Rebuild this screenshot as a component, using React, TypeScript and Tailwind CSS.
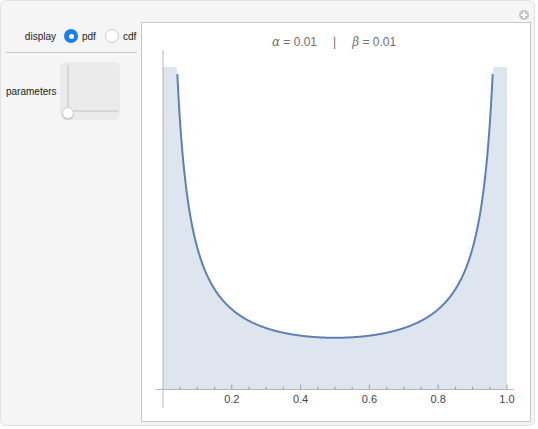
import React from "react";

const X0 = 163;
const X1 = 507;
const Y0 = 389;
const YTOP = 67;
const YMAX = 0.124;
const B = 199.97;

function pdf(x: number) {
  return Math.pow(x, -0.99) * Math.pow(1 - x, -0.99) / B;
}

function buildPaths() {
  const sx = (x: number) => X0 + x * (X1 - X0);
  const sy = (v: number) => Y0 - (Math.min(v, YMAX) / YMAX) * (Y0 - YTOP);
  const pts: [number, number][] = [];
  const n = 600;
  for (let i = 1; i < n; i++) {
    const x = i / n;
    pts.push([sx(x), sy(pdf(x))]);
  }
  // line only where the curve is below the clip
  const inside = pts.filter((p, i) => {
    const x = (i + 1) / n;
    return pdf(x) <= YMAX;
  });
  const line = inside.map((p, i) => `${i ? "L" : "M"}${p[0].toFixed(2)},${p[1].toFixed(2)}`).join("");
  const fill =
    `M${X0},${Y0}L${X0},${YTOP}` +
    pts.map((p) => `L${p[0].toFixed(2)},${p[1].toFixed(2)}`).join("") +
    `L${X1},${YTOP}L${X1},${Y0}Z`;
  return { line, fill };
}

function Plot() {
  const { line, fill } = buildPaths();
  const ticks: number[] = [];
  for (let i = 1; i <= 20; i++) ticks.push(i * 0.05);
  return (
    <svg width={388} height={371} viewBox="142 50 388 371" className="block">
      <path d={fill} fill="#dfe5ef" />
      <line x1={163} y1={50} x2={163} y2={408} stroke="#b5b5b5" strokeWidth={1} />
      <line x1={156} y1={389.5} x2={514} y2={389.5} stroke="#b5b5b5" strokeWidth={1} />
      {ticks.map((t, i) => {
        const x = X0 + t * (X1 - X0);
        const major = (i + 1) % 4 === 0;
        return (
          <line
            key={i}
            x1={x}
            y1={389}
            x2={x}
            y2={major ? 384.5 : 386.5}
            stroke="#8a8a8a"
            strokeWidth={0.8}
          />
        );
      })}
      {[0.2, 0.4, 0.6, 0.8, 1.0].map((t) => (
        <text
          key={t}
          x={X0 + t * (X1 - X0)}
          y={403}
          textAnchor="middle"
          fontSize={11}
          fill="#444"
          fontFamily="'Liberation Sans', Arial, sans-serif"
        >
          {t.toFixed(1)}
        </text>
      ))}
      <path d={line} fill="none" stroke="#5e81b5" strokeWidth={2} strokeLinejoin="round" />
    </svg>
  );
}

export default function App() {
  return (
    <div className="h-[429px] w-[538px] bg-white font-['Liberation_Sans',Arial,sans-serif]">
      <div className="relative flex h-[426px] w-[535px] rounded-md border border-[#e2e2e2] bg-[#f5f5f5]">
        <div className="w-[140px] shrink-0 pl-[5px] pt-[27px]">
          <div className="flex h-[16px] items-center">
            <span className="w-[50px] text-right text-[10px] text-[#222]">display</span>
            <span className="ml-[8px] flex h-[14px] w-[14px] items-center justify-center rounded-full bg-[#1a7ef6]">
              <span className="h-[5px] w-[5px] rounded-full bg-white" />
            </span>
            <span className="ml-[4px] text-[10px] text-[#222]">pdf</span>
            <span className="ml-[9px] h-[14px] w-[14px] rounded-full border border-[#c9c9c9] bg-white" />
            <span className="ml-[4px] text-[10px] text-[#222]">cdf</span>
          </div>
          <div className="mt-[8px] h-px w-[131px] bg-[#c8c8c8]" />
          <div className="mt-[9px] flex items-center">
            <span className="w-[50px] text-right text-[10px] text-[#222]">parameters</span>
            <div className="relative ml-[4px] h-[58px] w-[60px] rounded-md bg-[#ebebeb]">
              <div className="absolute left-[7px] top-[3px] h-[48px] w-[2px] bg-[#d6d6d6]" />
              <div className="absolute left-[8px] top-[48px] h-[2px] w-[50px] bg-[#d6d6d6]" />
              <div className="absolute left-[2px] top-[45px] h-[12px] w-[12px] rounded-full border border-[#d0d0d0] bg-white shadow-[0_1px_1px_rgba(0,0,0,0.15)]" />
            </div>
          </div>
        </div>
        <div className="mt-[21px] flex h-[400px] w-[390px] flex-col border border-[#c8c8c8] bg-white">
          <div className="flex h-[27px] items-end justify-center pr-[4px] text-[12px] leading-[16px] text-[#6f6f6f]">
            <span>
              <i className="font-['DejaVu_Serif',serif] text-[12px]">α</i> = 0.01
            </span>
            <span className="mx-[16px]">|</span>
            <span>
              <i className="font-['DejaVu_Serif',serif] text-[12px]">β</i> = 0.01
            </span>
          </div>
          <Plot />
        </div>
        <span className="absolute right-[5px] top-[9px] flex h-[10px] w-[10px] items-center justify-center rounded-full bg-[#c4c4c4]">
          <span className="absolute h-[6px] w-[2px] bg-white" />
          <span className="absolute h-[2px] w-[6px] bg-white" />
        </span>
      </div>
    </div>
  );
}
